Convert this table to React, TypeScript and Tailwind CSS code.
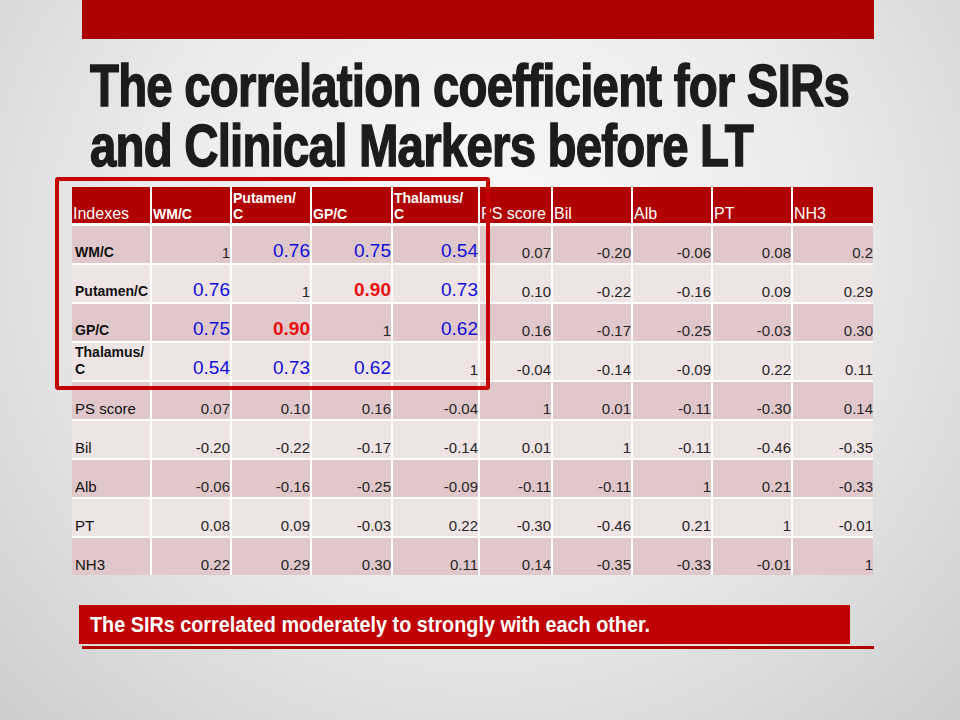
import React from 'react';

type Cell = { v: string; tone?: 'blue' | 'red' };

const headers = ['Indexes', 'WM/C', 'Putamen/ C', 'GP/C', 'Thalamus/ C', 'PS score', 'Bil', 'Alb', 'PT', 'NH3'];
const boldHeaders = ['WM/C', 'Putamen/ C', 'GP/C', 'Thalamus/ C'];

const b = (v: string): Cell => ({ v, tone: 'blue' });
const r = (v: string): Cell => ({ v, tone: 'red' });
const n = (v: string): Cell => ({ v });

const rows: { label: string; bold: boolean; cells: Cell[] }[] = [
  { label: 'WM/C', bold: true, cells: [n('1'), b('0.76'), b('0.75'), b('0.54'), n('0.07'), n('-0.20'), n('-0.06'), n('0.08'), n('0.2')] },
  { label: 'Putamen/C', bold: true, cells: [b('0.76'), n('1'), r('0.90'), b('0.73'), n('0.10'), n('-0.22'), n('-0.16'), n('0.09'), n('0.29')] },
  { label: 'GP/C', bold: true, cells: [b('0.75'), r('0.90'), n('1'), b('0.62'), n('0.16'), n('-0.17'), n('-0.25'), n('-0.03'), n('0.30')] },
  { label: 'Thalamus/ C', bold: true, cells: [b('0.54'), b('0.73'), b('0.62'), n('1'), n('-0.04'), n('-0.14'), n('-0.09'), n('0.22'), n('0.11')] },
  { label: 'PS score', bold: false, cells: [n('0.07'), n('0.10'), n('0.16'), n('-0.04'), n('1'), n('0.01'), n('-0.11'), n('-0.30'), n('0.14')] },
  { label: 'Bil', bold: false, cells: [n('-0.20'), n('-0.22'), n('-0.17'), n('-0.14'), n('0.01'), n('1'), n('-0.11'), n('-0.46'), n('-0.35')] },
  { label: 'Alb', bold: false, cells: [n('-0.06'), n('-0.16'), n('-0.25'), n('-0.09'), n('-0.11'), n('-0.11'), n('1'), n('0.21'), n('-0.33')] },
  { label: 'PT', bold: false, cells: [n('0.08'), n('0.09'), n('-0.03'), n('0.22'), n('-0.30'), n('-0.46'), n('0.21'), n('1'), n('-0.01')] },
  { label: 'NH3', bold: false, cells: [n('0.22'), n('0.29'), n('0.30'), n('0.11'), n('0.14'), n('-0.35'), n('-0.33'), n('-0.01'), n('1')] },
];

const toneClass = (c: Cell) =>
  c.tone === 'blue'
    ? 'text-[19px] text-[#1010d8]'
    : c.tone === 'red'
      ? 'text-[19px] font-bold text-[#e81010]'
      : 'text-[15px] text-[#262626]';

export default function App() {
  return (
    <div className="w-[960px] h-[720px] overflow-hidden bg-[radial-gradient(ellipse_at_50%_35%,#f9f9f9_0%,#ebebeb_50%,#cdcdcd_100%)] font-['Liberation_Sans',Arial,sans-serif]">
      {/* top bar */}
      <div className="ml-[82px] w-[792px] h-[39px] bg-[#ac0000]" />

      {/* title */}
      <h1 className="pl-[90px] mt-[17px] text-[60px] leading-[60px] font-bold text-[#1c1c1c] tracking-[-1px] [-webkit-text-stroke:1.5px_#1c1c1c]">
        <span className="block w-max origin-left scale-x-[0.79] whitespace-nowrap">The correlation coefficient for SIRs</span>
        <span className="block w-max origin-left scale-x-[0.79] whitespace-nowrap">and Clinical Markers before LT</span>
      </h1>

      {/* table */}
      <div className="relative ml-[72px] mt-[11px] w-[801px]">
        <div className="grid grid-cols-[78px_78px_78px_79px_85px_71px_78px_78px_78px_80px] gap-[2px] bg-white">
          {headers.map((h) => {
            const bold = boldHeaders.includes(h);
            return (
              <div
                key={h}
                className={`h-[36px] bg-[#b00000] text-white flex items-end pl-[1px] ${bold ? 'text-[14px] font-bold leading-[16px] pb-[1px]' : 'text-[16px] leading-none pb-[1px]'}`}
              >
                {h === 'Putamen/ C' || h === 'Thalamus/ C' ? (
                  <span>
                    {h.split(' ')[0]}
                    <br />
                    {h.split(' ')[1]}
                  </span>
                ) : (
                  <span>{h}</span>
                )}
              </div>
            );
          })}
          {rows.map((row, i) => {
            const bg = i % 2 === 0 ? 'bg-[#e0c8ca]' : 'bg-[#efe4e4]';
            return (
              <React.Fragment key={row.label}>
                <div
                  className={`h-[37px] ${bg} flex items-end pl-[3px] text-[#111] ${row.bold ? 'text-[14px] font-bold leading-[17px] pb-[2px]' : 'text-[15px] leading-none pb-[3px]'} ${i === 0 ? 'mt-[1px]' : ''}`}
                >
                  {row.label === 'Thalamus/ C' ? (
                    <span>
                      Thalamus/
                      <br />C
                    </span>
                  ) : (
                    <span>{row.label}</span>
                  )}
                </div>
                {row.cells.map((c, j) => (
                  <div
                    key={j}
                    className={`h-[37px] ${bg} flex items-end justify-end pb-[3px] leading-none ${toneClass(c)} ${i === 0 ? 'mt-[1px]' : ''}`}
                  >
                    {c.v}
                  </div>
                ))}
              </React.Fragment>
            );
          })}
        </div>
        {/* highlight box */}
        <div className="absolute left-[-17px] top-[-10px] w-[435px] h-[213px] border-[4px] border-[#c40000] rounded-[3px] pointer-events-none" />
      </div>

      {/* conclusion banner */}
      <div className="ml-[79px] mt-[30px] w-[771px] h-[39px] bg-[#c00000] flex items-center pl-[11px]">
        <span className="block w-max origin-left scale-x-[0.9] whitespace-nowrap text-white text-[22px] font-bold">
          The SIRs correlated moderately to strongly with each other.
        </span>
      </div>
      <div className="ml-[82px] mt-[2px] w-[792px] h-[3px] bg-[#b00000]" />
    </div>
  );
}
